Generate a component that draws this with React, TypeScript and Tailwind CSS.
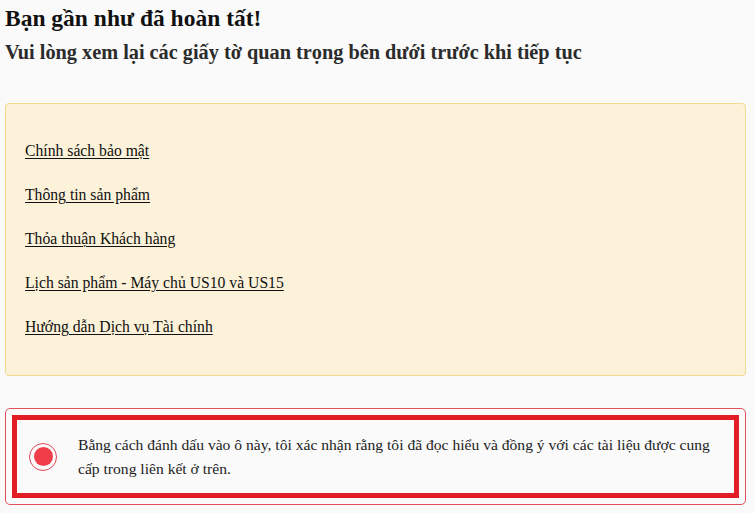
export default function App() {
  const links = [
    "Chính sách bảo mật",
    "Thông tin sản phẩm",
    "Thỏa thuận Khách hàng",
    "Lịch sản phẩm - Máy chủ US10 và US15",
    "Hướng dẫn Dịch vụ Tài chính",
  ];

  return (
    <div className="min-h-screen bg-[#fafafa] pl-[5px] pr-[8px] pt-[2px] font-['Liberation_Serif',serif] text-[#111]">
      <h1 className="text-[23.5px] font-bold leading-[32px]">Bạn gần như đã hoàn tất!</h1>
      <h2 className="mt-[4px] text-[20.3px] font-bold leading-[28px] text-[#2b2b2b]">
        Vui lòng xem lại các giấy tờ quan trọng bên dưới trước khi tiếp tục
      </h2>

      <div className="mt-[37px] flex h-[273px] flex-col gap-[24px] rounded-[4px] border border-[#f3d98a] bg-[#fcf2d9] px-[19px] pt-[37px]">
        {links.map((l) => (
          <a key={l} href="#" className="text-[15.7px] leading-[20px] text-[#111] underline underline-offset-2">
            {l}
          </a>
        ))}
      </div>

      <div className="mt-[32px] rounded-[5px] border border-[#e0515b] p-[6px]">
        <label className="flex h-[83px] items-center border-[5px] border-[#e31d25] bg-[#fafafa] pl-[12px] pr-[14px]">
          <span className="flex h-[28px] w-[28px] shrink-0 items-center justify-center rounded-full border border-[#e04555]">
            <span className="h-[19px] w-[19px] rounded-full bg-[#ef3e4a]" />
          </span>
          <span className="ml-[21px] text-[15.6px] leading-[24px] text-[#222]">
            Bằng cách đánh dấu vào ô này, tôi xác nhận rằng tôi đã đọc hiểu và đồng ý với các tài liệu được cung cấp trong liên kết ở trên.
          </span>
        </label>
      </div>
    </div>
  );
}
